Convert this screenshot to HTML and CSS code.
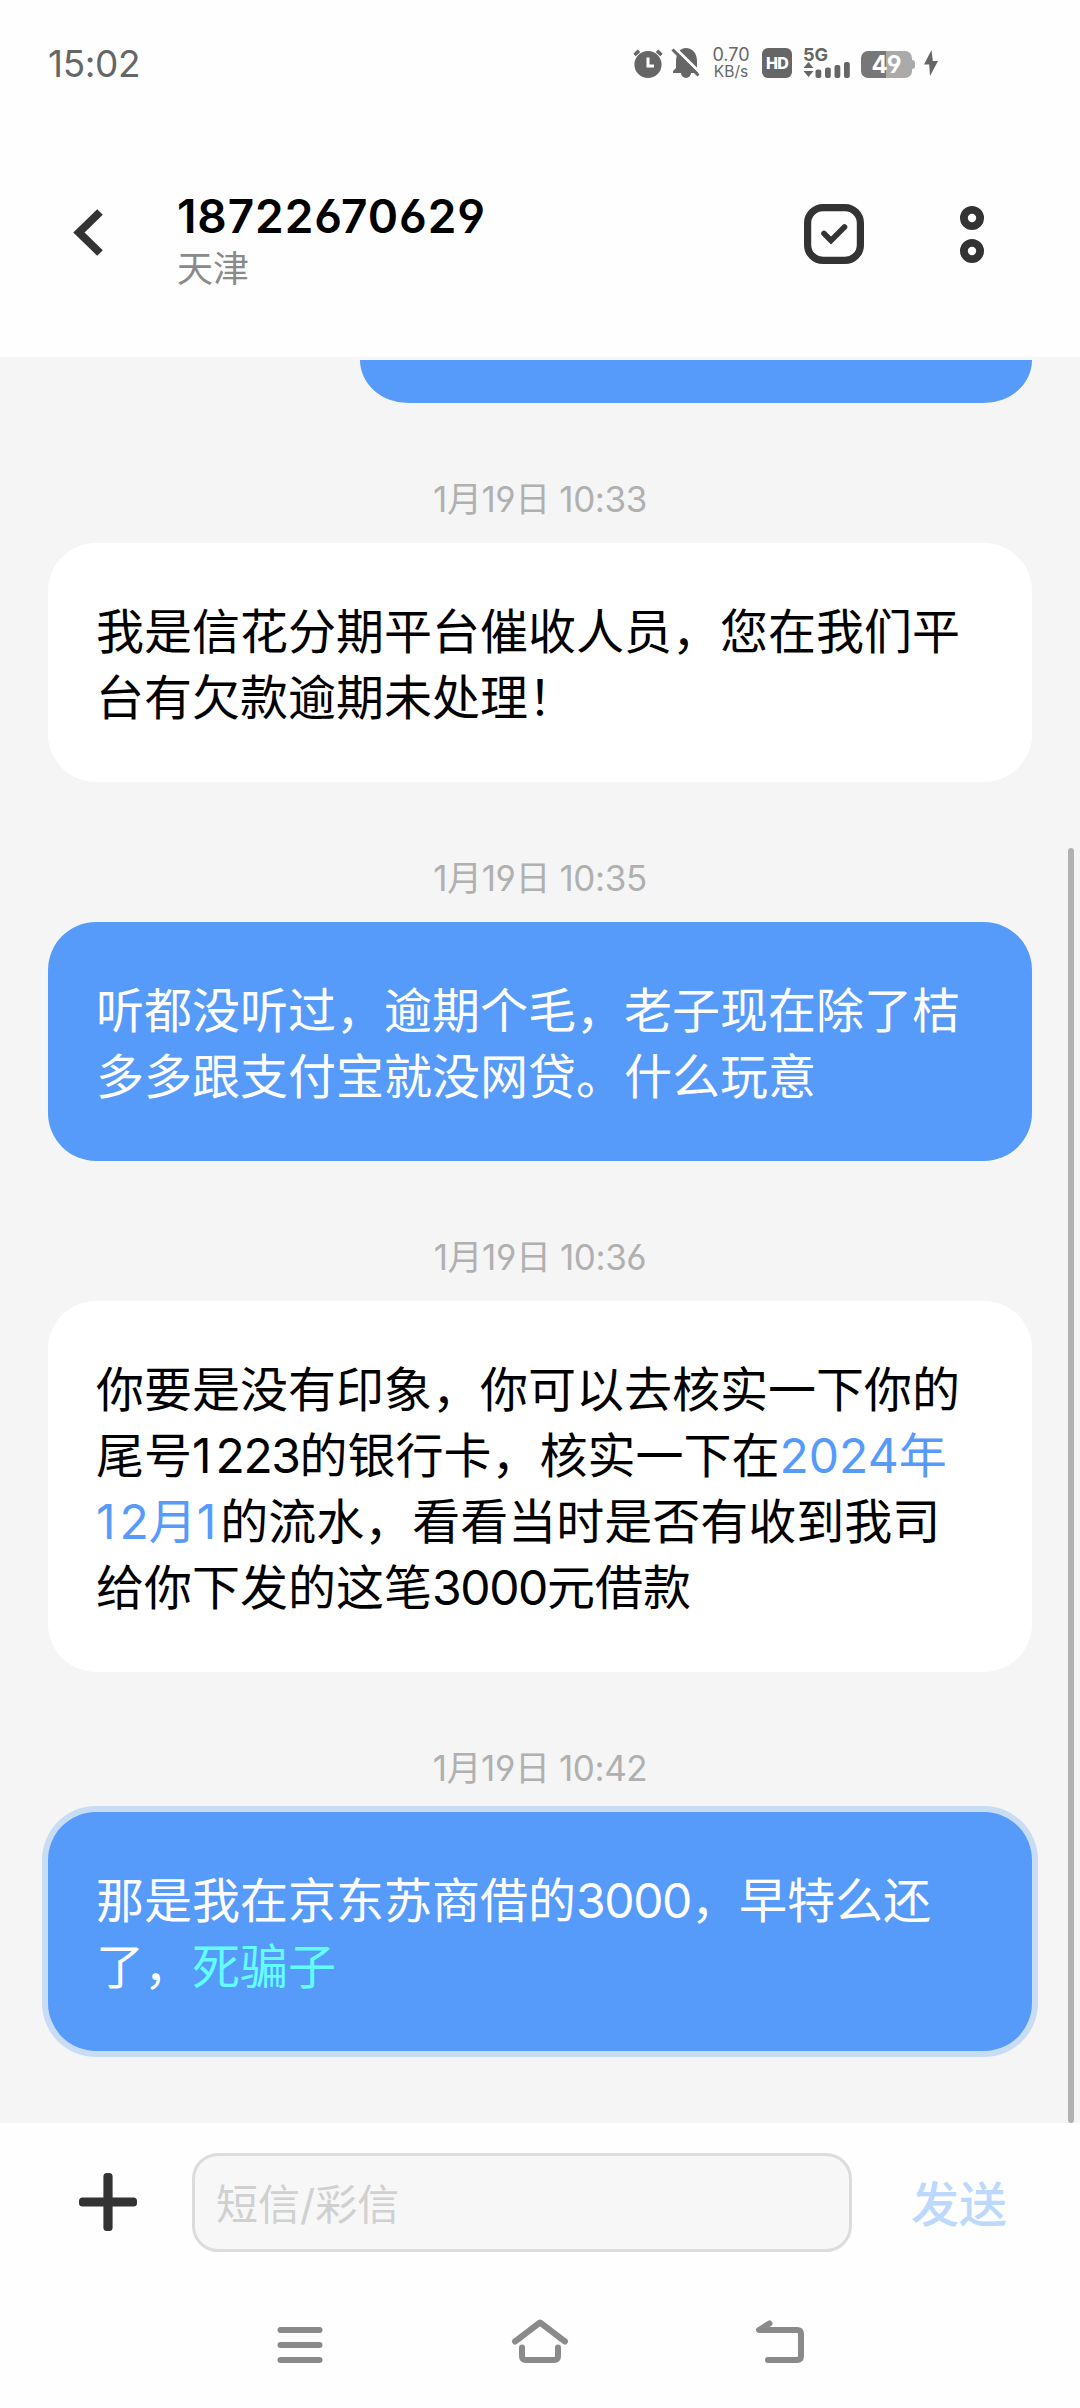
FILE: index.html
```html
<!DOCTYPE html>
<html lang="zh-CN">
<head>
<meta charset="utf-8">
<title>短信</title>
<link rel="stylesheet" href="styles.css">
</head>
<body>
<div class="phone">
  <div class="status">
    <span class="clock">15:02</span>
    <div class="status-icons">
      <svg class="alarm" width="30" height="30" viewBox="0 0 30 30"><circle cx="15" cy="16.5" r="13.6" fill="#666"/><path d="M1.5 7 6 2.8M24 2.8 28.500 7" stroke="#666" stroke-width="3.600"/><path d="M15 9.500v8.500h6" stroke="#fff" stroke-width="3" fill="none"/></svg>
      <svg class="bell" width="28" height="30" viewBox="0 0 28 30"><path d="M4 14C4 5 8 0 14 0s11 5 11 13v9.500l2 2.500H19a5 5 0 0 1-10 0H1v-2l3-3z" fill="#666"/><path d="M2 -1 29 25.500" stroke="#fff" stroke-width="3"/><path d="M.500 1.500 26.500 27.500" stroke="#666" stroke-width="3"/></svg>
      <div class="speed"><span>0.70</span><span>KB/s</span></div>
      <div class="hd"><span>HD</span></div>
      <div class="signal">
        <span class="net">5G</span>
        <svg width="48" height="16" viewBox="0 0 48 16"><path d="M.5 6 5.500 0l5 6zM.5 9h10l-5 6z" fill="#666"/><g fill="#666"><rect x="12.500" y="7.500" width="5.800" height="8.500" rx="2"/><rect x="22" y="5.500" width="5.800" height="10.500" rx="2"/><rect x="31.500" y="3" width="5.800" height="13" rx="2"/><rect x="41" y="0" width="5.800" height="16" rx="2"/></g></svg>
      </div>
      <div class="battery"><div class="cell">49</div><i class="nub"></i></div>
      <svg class="bolt" width="14" height="26" viewBox="0 0 14 26"><path d="M7.500 0 0 14.500h5.200L6 26l8-15H8.800z" fill="#666"/></svg>
    </div>
  </div>

  <header class="header">
    <svg class="back" width="32" height="50" viewBox="0 0 32 50"><path d="M28 4 7 24.500 28 45" fill="none" stroke="#333" stroke-width="8"/></svg>
    <div class="contact">
      <h1>18722670629</h1>
      <p>天津</p>
    </div>
    <svg class="select" width="60" height="60" viewBox="0 0 60 60" fill="none" stroke="#333"><rect x="3.600" y="3.600" width="52.800" height="52.800" rx="15.500" stroke-width="7.200"/><path d="M20 29.500 27 36.500 40.500 23" stroke-width="5.600" stroke-linecap="round"/></svg>
    <svg class="more" width="24" height="57" viewBox="0 0 24 57" fill="none" stroke="#333" stroke-width="7.800"><circle cx="12" cy="12" r="8.100"/><circle cx="12" cy="45" r="8.100"/></svg>
  </header>

  <main class="chat">
    <div class="bubble sent clipped"></div>
    <time>1月19日 10:33</time>
    <div class="bubble">我是信花分期平台催收人员，您在我们平<br>台有欠款逾期未处理！</div>
    <time>1月19日 10:35</time>
    <div class="bubble sent">听都没听过，逾期个毛，老子现在除了桔<br>多多跟支付宝就没网贷。什么玩意</div>
    <time>1月19日 10:36</time>
    <div class="bubble">你要是没有印象，你可以去核实一下你的<br>尾号<span class="one">1</span><span class="num">223</span>的银行卡，核实一下在<span class="date">2024年<br><span class="one">1</span>2月<span class="one">1</span></span>的流水，看看当时是否有收到我司<br>给你下发的这笔<span class="num">3000</span>元借款</div>
    <time>1月19日 10:42</time>
    <div class="bubble sent focused">那是我在京东苏商借的<span class="num">3000</span>，早特么还<br>了，<span class="flag">死骗子</span></div>
    <i class="scrollbar"></i>
  </main>

  <footer class="composer">
    <svg class="plus" width="58" height="58" viewBox="0 0 58 58" fill="#333"><rect x="24.400" y="0" width="9.200" height="58" rx="3.500"/><rect x="0" y="24.400" width="58" height="9.200" rx="3.500"/></svg>
    <div class="field">短信/彩信</div>
    <span class="send">发送</span>
  </footer>

  <nav class="nav">
    <svg width="46" height="44" viewBox="0 0 46 44" stroke="#8a8a8a" stroke-width="6" stroke-linecap="round"><path d="M3.500 11h39M3.500 26h39M3.500 41h39"/></svg>
    <svg width="58" height="44" viewBox="0 0 58 44" fill="none" stroke="#8a8a8a" stroke-width="6" stroke-linecap="round" stroke-linejoin="round"><path d="M4 22.500 29 3.500 54 22.500M11 28.500V37q0 4 4 4h28q4 0 4-4v-8.500"/></svg>
    <svg width="48" height="44" viewBox="0 0 48 44" fill="none" stroke="#8a8a8a" stroke-width="6" stroke-linecap="round" stroke-linejoin="round"><path d="M13.500 4.500 3 11h38q4 0 4 4v22q0 4-4 4H12"/></svg>
  </nav>
</div>
</body>
</html>
```

FILE: styles.css
```css
* { box-sizing: border-box; }

body {
  margin: 0;
  background: #fefefe;
  font-family: Inter, "Noto Sans CJK SC", sans-serif;
  font-feature-settings: "cv03", "cv04";
}

svg { display: block; flex: none; overflow: visible; }

.phone {
  width: 1080px;
  height: 2408px;
  display: flex;
  flex-direction: column;
  overflow: hidden;
}

/* status bar */
.status {
  height: 126px;
  display: flex;
  justify-content: space-between;
  align-items: center;
  padding: 0 142px 0 48px;
  color: #666;
}
.clock { font-size: 37px; letter-spacing: -0.4px; }
.status-icons { display: flex; align-items: center; height: 30px; }
.bell { margin-left: 9px; }
.speed {
  width: 36px;
  margin-left: 13px;
  display: flex;
  flex-direction: column;
  align-items: center;
  font-size: 18px;
  line-height: 17px;
  white-space: nowrap;
}
.speed span + span { font-size: 15.5px; }
.hd {
  width: 30px;
  height: 30px;
  margin-left: 13px;
  border-radius: 6px;
  background: #666;
  color: #fff;
  font-size: 16px;
  font-weight: 800;
  line-height: 30px;
  letter-spacing: -0.8px;
  text-align: center;
}
.signal {
  width: 48px;
  height: 30px;
  margin-left: 11px;
  display: flex;
  flex-direction: column;
  justify-content: space-between;
}
.net { font-size: 18px; font-weight: 700; line-height: 14px; }
.battery { display: flex; align-items: center; margin: 3px 0 0 10px; }
.cell {
  width: 51px;
  height: 27px;
  border-radius: 7px;
  background: linear-gradient(90deg, #777 49%, #aaa 49%);
  color: #fff;
  font-size: 24px;
  font-weight: 700;
  line-height: 28px;
  text-align: center;
}
.nub { width: 3px; height: 9px; border-radius: 0 3px 3px 0; background: #aaa; }
.bolt { margin-left: 9px; }

/* conversation header */
.header {
  height: 231px;
  display: flex;
  align-items: flex-start;
  padding: 66px 96px 0 72px;
}
.back { margin-top: 16px; }
.contact { width: 400px; margin-left: 73px; }
.contact h1 {
  margin: 0;
  font-size: 46px;
  font-weight: 600;
  line-height: 48px;
  letter-spacing: 0.9px;
  color: #000;
}
.contact p { margin: 5px 0 0; font-size: 36px; line-height: 48px; color: #8a8a8a; }
.select { margin: 12px 0 0 227px; }
.more { margin: 14px 0 0 96px; }

/* message list */
.chat {
  position: relative;
  height: 1766px;
  padding: 3px 48px 0;
  display: flex;
  flex-direction: column;
  background: #f5f5f5;
}
.bubble {
  padding: 56px 48px 51px;
  border-radius: 48px;
  background: #fff;
  color: #000;
  font-size: 48px;
  line-height: 66px;
  white-space: nowrap;
}
.sent { background: #579bfa; color: #fff; }
.clipped {
  width: 672px;
  height: 43px;
  padding: 0;
  align-self: flex-end;
  border-radius: 0 0 48px 48px / 0 0 43px 43px;
}
.focused { box-shadow: 0 0 0 6px #c8dcf6; }
.num { letter-spacing: -1.4px; }
.one { letter-spacing: 4px; }
.date { color: #579bfa; }
.flag { color: #62fcfa; }
time {
  height: 140px;
  padding-top: 72px;
  font-size: 35px;
  line-height: 48px;
  letter-spacing: -0.4px;
  text-align: center;
  color: #b0b0b0;
}
.scrollbar {
  position: absolute;
  right: 6px;
  bottom: 0;
  width: 6px;
  height: 1275px;
  border-radius: 3px;
  background: #b1b1b1;
}

/* message composer */
.composer {
  height: 159px;
  display: flex;
  align-items: center;
  padding: 0 72px 0 79px;
}
.plus { margin-bottom: 1px; }
.field {
  width: 660px;
  height: 99px;
  margin-left: 55px;
  padding-left: 21px;
  border: 3px solid #dcdcdc;
  border-radius: 26px;
  background: #f7f7f7;
  color: #d0d0d0;
  font-size: 42px;
  line-height: 97px;
}
.send { margin: 0 0 3px 59px; font-size: 48px; font-weight: 500; color: #bcd8fd; }

/* system navigation */
.nav {
  display: flex;
  justify-content: space-between;
  padding: 37px 276px 0 277px;
}
```
